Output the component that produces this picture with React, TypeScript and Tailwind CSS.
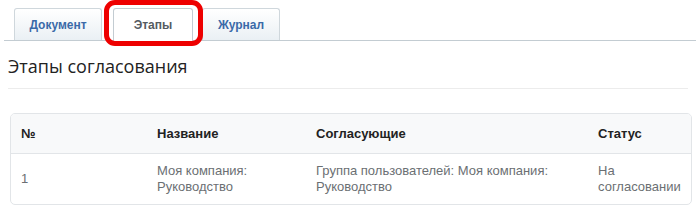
import React from "react";

export default function App() {
  return (
    <div className="w-[696px] h-[212px] bg-white overflow-hidden relative" style={{ fontFamily: '"Liberation Sans", Arial, sans-serif' }}>
      {/* tabs */}
      <div className="ml-[4px] h-[41px] border-b border-[#c3ccd2] flex items-end pl-[10px]">
        <div className="w-[88px] h-[32px] border border-b-0 border-[#cfd7dc] rounded-t-[3px] bg-gradient-to-b from-[#ffffff] to-[#eaf0f4] flex items-center justify-center text-[12px] font-bold text-[#3b6aa8]">
          Документ
        </div>
        <div className="ml-[11px] w-[80px] h-[33px] -mb-px border border-b-0 border-[#c3ccd2] rounded-t-[3px] bg-white flex items-center justify-center text-[12px] font-bold text-[#555b61]">
          Этапы
        </div>
        <div className="ml-[9px] w-[78px] h-[32px] border border-b-0 border-[#cfd7dc] rounded-t-[3px] bg-gradient-to-b from-[#ffffff] to-[#eaf0f4] flex items-center justify-center text-[12px] font-bold text-[#3b6aa8]">
          Журнал
        </div>
      </div>
      <div className="absolute left-[104px] top-0 w-[99px] h-[46px] border-[5px] border-[#ee0000] rounded-[11px] pointer-events-none" />

      {/* title */}
      <div className="px-[8px] pt-[13px]">
        <div className="text-[18px] leading-[24px] text-[#222] pb-[10px] border-b border-[#ececec]" style={{ fontFamily: '"Open Sans", sans-serif' }}>
          Этапы согласования
        </div>
      </div>

      {/* table */}
      <div className="ml-[10px] mt-[24px] w-[682px] border border-[#e2e5e8] rounded-[5px] overflow-hidden">
        <div className="grid grid-cols-[136px_159px_282px_1fr] bg-[#f8f9fa] border-b border-[#e2e5e8] h-[40px] items-center text-[13px] font-bold text-[#222]">
          <div className="pl-[10px]">№</div>
          <div className="pl-[10px]">Название</div>
          <div className="pl-[10px]">Согласующие</div>
          <div className="pl-[10px]">Статус</div>
        </div>
        <div className="grid grid-cols-[136px_159px_282px_1fr] h-[50px] items-center text-[13px] leading-[16px] text-[#6b6f73]">
          <div className="pl-[10px]">1</div>
          <div className="pl-[10px]">Моя компания:<br />Руководство</div>
          <div className="pl-[10px]">Группа пользователей: Моя компания:<br />Руководство</div>
          <div className="pl-[10px]">На<br />согласовании</div>
        </div>
      </div>
    </div>
  );
}
